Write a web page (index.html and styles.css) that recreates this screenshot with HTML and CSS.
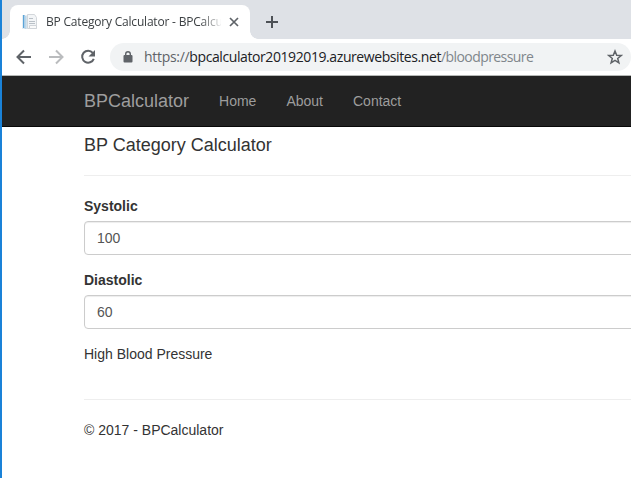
FILE: index.html
```html
<!DOCTYPE html>
<html lang="en">
<head>
<meta charset="utf-8">
<title>BP Category Calculator - BPCalculator</title>
<link rel="stylesheet" href="styles.css">
</head>
<body>
<div class="window">
  <header class="tab-strip">
    <div class="tab">
      <svg class="favicon" width="16" height="16" viewBox="0 0 16 16">
        <path fill="#e4edf3" d="M0 1h6v14H0z"/>
        <path fill="#5ba4d8" d="M1 1h1.500v13H1z"/>
        <path fill="#bcd6e8" d="M2.500 2h2v13h-2z"/>
        <path fill="#f3f5f7" stroke="#d3d7db" d="M5.500.500h7l2 3v11h-9z"/>
        <path stroke="#b9c0c7" d="M7 4.500h4M7 7.500h6M7 9.500h6"/>
        <path fill="#fafafa" stroke="#d0d4d9" d="M7.500 11.500h7v3h-7z"/>
      </svg>
      <span class="tab-title">BP Category Calculator - BPCalcu</span>
      <svg class="close" width="10" height="10" viewBox="0 0 10 10"><path d="M1 1l8 8M9 1l-8 8"/></svg>
    </div>
    <svg class="new-tab" width="12" height="12" viewBox="0 0 12 12"><path d="M6 0v12M0 6h12"/></svg>
  </header>
  <div class="toolbar">
    <svg class="back" width="16" height="16" viewBox="0 0 16 16"><path d="M15 8H2M8 1.500L1.500 8 8 14.500"/></svg>
    <svg class="forward" width="16" height="16" viewBox="0 0 16 16"><path d="M1 8h13M8 1.500L14.500 8 8 14.500"/></svg>
    <svg class="reload" width="16" height="16" viewBox="0 0 16 16"><path class="arc" d="M12.800 3.800A6 6 0 1 0 13.800 9.800"/><path class="tip" d="M15 1v6.500H8.500z"/></svg>
    <div class="omnibox">
      <svg class="lock" width="10" height="12" viewBox="0 0 10 12"><path class="body" d="M1.500 4h7q1 0 1 1v5.500q0 1-1 1h-7q-1 0-1-1V5q0-1 1-1z"/><path class="shackle" d="M2.700 5V3a2.300 2.300 0 0 1 4.600 0v2"/></svg>
      <span class="url"><span class="scheme">https://</span><span class="host">bpcalculator20192019.azurewebsites.net</span><span class="path">/bloodpressure</span></span>
      <svg class="star" width="16" height="16" viewBox="0 0 16 16"><path d="M8 2l1.700 4.200 4.500.3-3.500 2.900 1.200 4.400L8 11.400l-3.900 2.400 1.200-4.400L1.800 6.500l4.500-.3z"/></svg>
    </div>
  </div>
  <nav class="navbar">
    <a class="brand">BPCalculator</a>
    <a class="link">Home</a>
    <a class="link">About</a>
    <a class="link">Contact</a>
  </nav>
  <main class="content">
    <h4>BP Category Calculator</h4>
    <hr>
    <form>
      <div class="form-group">
        <label for="systolic">Systolic</label>
        <input id="systolic" type="text" value="100">
      </div>
      <div class="form-group">
        <label for="diastolic">Diastolic</label>
        <input id="diastolic" type="text" value="60">
      </div>
      <div class="result">High Blood Pressure</div>
    </form>
    <hr class="footer-rule">
    <footer>© 2017 - BPCalculator</footer>
  </main>
</div>
</body>
</html>
```
FILE: styles.css
```css
* { box-sizing: border-box; }
body {
  margin: 0;
  overflow: hidden;
  font: 14px/20px "Liberation Sans", Arial, sans-serif;
  color: #333;
  background: #fff;
}
.window {
  height: 478px;
  border-left: 2px solid #1a82d8;
  overflow: hidden;
}
svg { flex: none; fill: none; stroke-width: 1; }
.tab-strip {
  display: flex;
  height: 39px;
  padding: 5px 0 0 8px;
  background: #dee1e6;
}
.tab {
  position: relative;
  display: flex;
  align-items: center;
  width: 240px;
  height: 34px;
  padding: 0 11px 0 12px;
  border-radius: 8px 8px 0 0;
  background: #fff;
}
.tab::before, .tab::after {
  content: "";
  position: absolute;
  bottom: 0;
  width: 8px;
  height: 8px;
}
.tab::before { left: -8px; background: radial-gradient(circle at 0 0, transparent 7.500px, #fff 8px); }
.tab::after { right: -8px; background: radial-gradient(circle at 100% 0, transparent 7.500px, #fff 8px); }
.tab-title {
  width: 175px;
  margin: 0 8px;
  white-space: nowrap;
  font: 12px/18px "Open Sans", "Noto Sans", sans-serif;
  letter-spacing: -0.2px;
  color: #3c4043;
  -webkit-mask-image: linear-gradient(to right, #000 154px, transparent 177px);
  mask-image: linear-gradient(to right, #000 154px, transparent 177px);
}
.close { stroke: #5f6368; stroke-width: 1.700; }
.new-tab { margin: 11px 0 0 16px; stroke: #4d5156; stroke-width: 2; }
.toolbar {
  display: flex;
  align-items: center;
  height: 37px;
  padding-left: 14px;
  border-bottom: 1px solid #b5b8b6;
}
.back, .forward, .reload .arc { stroke: #5f6368; stroke-width: 2; }
.forward { margin-left: 16px; stroke: #babcbe; }
.reload { margin-left: 16px; }
.reload .tip { fill: #5f6368; }
.omnibox {
  display: flex;
  align-items: center;
  width: 521px;
  height: 28px;
  margin-left: 14px;
  padding: 0 8px 0 13px;
  flex: none;
  border-radius: 14px;
  background: #f1f3f4;
}
.lock .body { fill: #5f6368; }
.lock .shackle { stroke: #5f6368; stroke-width: 1.400; }
.url {
  flex: 1;
  margin-left: 11px;
  white-space: nowrap;
  font: 14px/20px "Open Sans", "Noto Sans", sans-serif;
  letter-spacing: -0.3px;
}
.scheme { color: #5f6368; }
.host { color: #202124; letter-spacing: -0.41px; }
.path { color: #80868b; letter-spacing: -0.58px; }
.star { stroke: #5f6368; stroke-width: 1.500; }
.navbar {
  display: flex;
  height: 51px;
  padding-left: 67px;
  border-bottom: 1px solid #080808;
  background: #222;
  color: #9d9d9d;
}
.brand, .link { padding: 15px; line-height: 20px; }
.brand { font-size: 18px; }
.content { padding-left: 82px; }
h4 {
  margin: 8px 0 0;
  font-size: 18px;
  font-weight: 500;
  line-height: 20px;
}
hr {
  height: 1px;
  margin: 20px 0;
  border: 0;
  background: #eee;
}
.form-group { margin-bottom: 15px; }
label {
  display: block;
  margin-bottom: 5px;
  font-weight: 700;
}
input {
  display: block;
  width: 580px;
  height: 34px;
  padding: 6px 12px;
  border: 1px solid #ccc;
  border-radius: 4px;
  font: inherit;
  color: #555;
  background: #fff;
  box-shadow: inset 0 1px 1px rgba(0, 0, 0, .075);
}
.footer-rule { margin-top: 35px; }
```
